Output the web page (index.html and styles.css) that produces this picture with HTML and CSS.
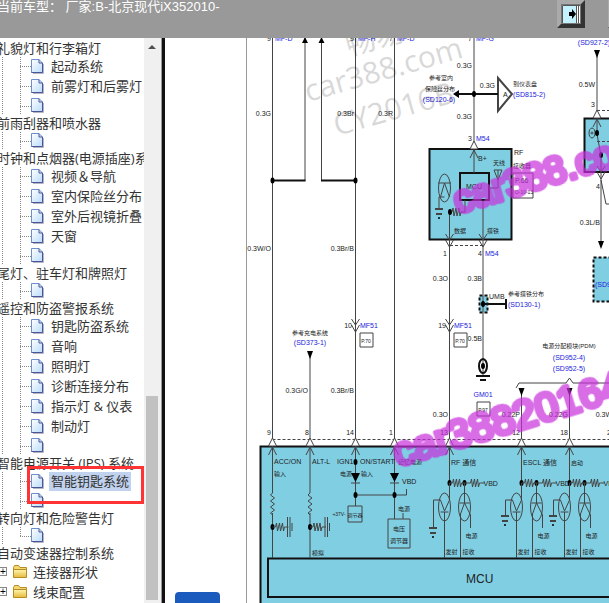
FILE: index.html
```
<!DOCTYPE html>
<html lang="zh-CN">
<head>
  <meta charset="UTF-8" />
  <meta name="viewport" content="width=device-width, initial-scale=1" />
  <title>北京现代iX35 电路图</title>
  <link rel="stylesheet" href="styles.css">
</head>
<body>

<svg class="defs" aria-hidden="true">
  <defs>
    <linearGradient id="paper" x1="0" y1="0" x2="1" y2="1">
      <stop offset="0" stop-color="#ffffff" />
      <stop offset="1" stop-color="#b9dcfb" />
    </linearGradient>
    <linearGradient id="gold" x1="0" y1="0" x2="0" y2="1">
      <stop offset="0" stop-color="#fff6b0" />
      <stop offset="1" stop-color="#e6b93c" />
    </linearGradient>
    <symbol id="page" viewBox="0 0 13 15">
      <path d="M2 14.5h10.5V5" fill="none" stroke="#b5b5c4" />
      <path d="M.5.5h7.500l3.500 3.500v9.500H.5z" fill="url(#paper)" stroke="#6d8fd0" />
      <path d="M8 .5v3.500h3.500M11.500 4v9.500H.5" fill="none" stroke="#4a559a" />
    </symbol>
    <symbol id="folder" viewBox="0 0 15 13">
      <path d="M.5 12V2.500l1-2h4l1.500 2h6.500V12z" fill="#f5d670" stroke="#b58d22" />
      <path d="M.5 12.500V4.500h13v8z" fill="url(#gold)" stroke="#b58d22" />
    </symbol>

    <!-- circuit parts, all drawn around 0,0 -->
    <g id="notch">
      <path d="M-4 0 0-8 4 0z" fill="#fff" />
      <path d="M-4 9 0 1 4 9" />
    </g>
    <g id="joint"><path d="M-4-6 0 0 4-6M-4 0 0 7 4 0" /></g>
    <ellipse id="dot" rx="2" ry="3" class="solid" />
    <path id="down" d="M-3-4h6L0 4z" class="solid" />
    <path id="zig" d="M0 0l1-4 1 8 2-8 1 8 2-8 1 8 1-4h1" />
    <path id="coil" d="M0-10l-2 2 4 3-4 3 4 3-4 3 4 3-4 3 2 2" />
    <g id="ground">
      <path d="M-4 0h8M-3 5h6" stroke-width="2" />
      <circle cy="9" r="1" class="solid" />
    </g>
    <g id="pull">
      <use href="#dot" />
      <path d="M0 0h3M13 0h3" />
      <path d="M15-10v20M17.500-10v20M19.500-4v8" stroke-width="1" />
      <use href="#zig" x="3" />
    </g>
    <g id="driver">
      <use href="#dot" />
      <use href="#zig" x="3" />
      <use href="#dot" x="15" />
      <path d="M0 0h3M13 0h8M31 0h4M0 0V17L-5 28M-16 17h7L-5 28M-9 29h8M-5 29v46" />
      <path d="M15 0v20M10 20h10M11 75V31L15 20M15 20l6 12v13" />
      <use href="#zig" x="21" />
      <ellipse cx="-5" cy="24" rx="6" ry="14" />
      <ellipse cx="15" cy="24" rx="6" ry="14" />
      <text class="label" x="34" y="3">VBD</text>
      <text class="label cn" x="16" y="55">电源</text>
      <text class="label cn" x="-4" y="71">发射</text>
      <text class="label cn" x="13" y="71">接收</text>
    </g>
  </defs>
</svg>

<header>
  <h1>当前车型： 厂家:B-北京现代iX352010-</h1>
  <button class="tool" aria-label="收起目录">
    <svg width="18" height="18" viewBox="0 0 18 18" aria-hidden="true">
      <path d="M0 0h18v18H0z" fill="#c3f1fd" />
      <path d="M14 0h4v18h-4z" fill="#fff" />
      <path d="M.5 18V.5H18M14.500 0v18M16.500 0v18" fill="none" stroke="#555" />
      <path d="M7 7h3V4l4 5-4 5v-3H7z" fill="#000" />
    </svg>
  </button>
  <button class="tool next" aria-label="下一页"></button>
</header>

<main>
  <nav>
    <ul class="tree">
      <li class="group">礼貌灯和行李箱灯</li>
      <li class="leaf"><svg><use href="#page" /></svg><a href="#">起动系统</a></li>
      <li class="leaf"><svg><use href="#page" /></svg><a href="#">前雾灯和后雾灯</a></li>
      <li class="leaf empty"><svg><use href="#page" /></svg></li>
      <li class="group">前雨刮器和喷水器</li>
      <li class="leaf empty"><svg><use href="#page" /></svg></li>
      <li class="group">时钟和点烟器(电源插座)系统</li>
      <li class="leaf"><svg><use href="#page" /></svg><a href="#">视频＆导航</a></li>
      <li class="leaf"><svg><use href="#page" /></svg><a href="#">室内保险丝分布</a></li>
      <li class="leaf"><svg><use href="#page" /></svg><a href="#">室外后视镜折叠</a></li>
      <li class="leaf"><svg><use href="#page" /></svg><a href="#">天窗</a></li>
      <li class="leaf empty"><svg><use href="#page" /></svg></li>
      <li class="group">尾灯、驻车灯和牌照灯</li>
      <li class="leaf empty"><svg><use href="#page" /></svg></li>
      <li class="group">遥控和防盗警报系统</li>
      <li class="leaf"><svg><use href="#page" /></svg><a href="#">钥匙防盗系统</a></li>
      <li class="leaf"><svg><use href="#page" /></svg><a href="#">音响</a></li>
      <li class="leaf"><svg><use href="#page" /></svg><a href="#">照明灯</a></li>
      <li class="leaf"><svg><use href="#page" /></svg><a href="#">诊断连接分布</a></li>
      <li class="leaf"><svg><use href="#page" /></svg><a href="#">指示灯 &amp; 仪表</a></li>
      <li class="leaf"><svg><use href="#page" /></svg><a href="#">制动灯</a></li>
      <li class="leaf empty"><svg><use href="#page" /></svg></li>
      <li class="group">智能电源开关 (IPS) 系统</li>
      <li class="leaf active"><svg><use href="#page" /></svg><a href="#">智能钥匙系统</a></li>
      <li class="leaf empty"><svg><use href="#page" /></svg></li>
      <li class="group">转向灯和危险警告灯</li>
      <li class="leaf empty last"><svg><use href="#page" /></svg></li>
      <li class="group">自动变速器控制系统</li>
      <li class="folder"><button aria-label="展开">+</button><svg><use href="#folder" /></svg><a href="#">连接器形状</a></li>
      <li class="folder"><button aria-label="展开">+</button><svg><use href="#folder" /></svg><a href="#">线束配置</a></li>
    </ul>
    <div class="scrollbar" aria-hidden="true">
      <span class="up"></span>
      <span class="space"></span>
      <span class="thumb"></span>
    </div>
  </nav>

  <section class="viewer">
    <svg class="diagram" viewBox="165 38 444 565" preserveAspectRatio="xMinYMin slice" role="img" aria-label="智能钥匙系统电路图">
      <path d="M246.500 38v565" class="edge" />

      <!-- modules -->
      <g class="module">
        <path d="M429.500 149h82v90.500h-82z" />
        <path d="M584.500 118.500H612V172h-27.500z" />
        <path d="M260.500 446.500H612V606H260.500z" />
        <path d="M268 558.500h344V597H268z" />
        <path d="M460 173h29v27h-29z" />
        <path d="M593.500 257.500H612v44h-18.500zM479.500 295.500h8v17h-8z" class="dashed" />
      </g>

      <!-- wires -->
      <g class="wire">
        <path d="M272.500 38v455M272.500 513v45M305 38v143M321.500 38v143M355.500 38v468M394.500 38v481M310 355v138M310 513v45" />
        <path d="M474 38v135M449.500 212v271M483 200v175M597 54v80l4 22v90M601 180l5 24h6" />
        <path d="M521.500 390v93M569.500 390v93M516 388l3-5h47l3.500-5 3.500 5H612" />
        <path d="M355.500 495h51v-6M403 513v6M461 212h4v-12M489 188h9v-18M494 170h8l-4 10zM439 209v-12h5.500M438 183h13M444.500 183l-4 14M444.500 183l5 14" />
        <path d="M348 506h14v16h-14zM388 519h22v29h-22zM513 173h20v25h-20zM360 333h13v14h-13zM454 333h13v14h-13zM477 402h13v14h-13z" />
        <path d="M498 78l14 16-14 17z" stroke-width="2" />
        <path d="M433.500 500v28M505.500 500v16M553.500 500v16" />
        <path d="M272.500 439.500H612M450 245.500h33M597 110.500h15M597 141.500h15" class="dashed" />
        <path d="M272.500 180.500h33M321 180.500h34.500M455 94h43M483 304h23M506 299v10" class="bold" />
        <path d="M476 376h14M480 380h6" class="bold" />
        <ellipse cx="444.500" cy="188" rx="6" ry="14" />
        <ellipse cx="592" cy="133" rx="3" ry="5" />
        <circle cx="592" cy="133" r="1" />
        <ellipse cx="483" cy="366" rx="4" ry="7" class="bold" />
        <path d="M351 473h9l-4.500 9zM390 473h9l-4.500 9z" class="solid" />
        <path d="M351 483h9M390 483h9" />
        <path d="M459 90l-6 4 6 4zM302 43l3-6 3 6zM318.500 43l3-6 3 6z" class="solid" />

        <use href="#notch" x="272.500" y="446" />
        <use href="#notch" x="310" y="446" />
        <use href="#notch" x="355.500" y="446" />
        <use href="#notch" x="394.500" y="446" />
        <use href="#notch" x="449.500" y="446" />
        <use href="#notch" x="521.500" y="446" />
        <use href="#notch" x="569.500" y="446" />
        <use href="#notch" x="474" y="149" />
        <use href="#notch" x="597" y="118" />
        <use href="#joint" x="355.500" y="325" />
        <use href="#joint" x="449.500" y="325" />
        <use href="#joint" x="449.500" y="240" />
        <use href="#joint" x="483" y="240" />
        <use href="#joint" x="601" y="172" />
        <use href="#dot" x="272.500" y="180.500" />
        <use href="#dot" x="355.500" y="180.500" />
        <use href="#dot" x="474" y="94" />
        <use href="#dot" x="450" y="212" />
        <use href="#dot" x="597" y="133" />
        <use href="#dot" x="601" y="155" />
        <use href="#dot" x="483" y="304" />
        <use href="#dot" x="483" y="366" />
        <use href="#dot" x="355.500" y="462" />
        <use href="#dot" x="355.500" y="495" />
        <use href="#dot" x="394.500" y="495" />
        <use href="#down" x="310" y="355" />
        <use href="#down" x="597" y="54" />
        <use href="#down" x="601" y="245" />
        <use href="#down" x="521.500" y="392" />
        <use href="#down" x="569.500" y="392" />
        <use href="#zig" x="452" y="212" />
        <use href="#coil" x="272.500" y="503" />
        <use href="#coil" x="310" y="503" />
        <use href="#ground" x="439" y="209" />
        <use href="#ground" x="433" y="528" />
        <use href="#ground" x="505" y="516" />
        <use href="#ground" x="553" y="516" />
        <use href="#pull" x="272.500" y="527" />
        <use href="#pull" x="310" y="527" />
        <use href="#driver" x="449.500" y="483" />
        <use href="#driver" x="521.500" y="483" />
        <use href="#driver" x="569.500" y="483" />
      </g>

      <!-- wire colours and sizes, right aligned to the wire -->
      <g class="label end">
        <text x="271" y="41">9</text>
        <text x="354" y="41">9</text>
        <text x="393" y="41">7</text>
        <text x="472" y="41">7</text>
        <text x="271" y="116">0.3G</text>
        <text x="354" y="116">0.3Br</text>
        <text x="393" y="116">0.3R</text>
        <text x="472" y="68">0.3G</text>
        <text x="495" y="88">0.3G</text>
        <text x="472" y="119">0.3G</text>
        <text x="472" y="141">3</text>
        <text x="595" y="87">0.5W</text>
        <text x="595" y="107">3</text>
        <text x="600" y="189">4</text>
        <text x="600" y="225">0.3L/B</text>
        <text x="271" y="251">0.3W/O</text>
        <text x="354" y="251">0.3Br/B</text>
        <text x="447" y="256">1</text>
        <text x="482" y="256">4</text>
        <text x="448" y="281">0.3O</text>
        <text x="482" y="281">0.3B</text>
        <text x="352" y="328">10</text>
        <text x="446" y="328">19</text>
        <text x="482" y="341">0.5B</text>
        <text x="308" y="393">0.3G/O</text>
        <text x="354" y="393">0.3Br/B</text>
        <text x="448" y="417">0.3O</text>
        <text x="520" y="417">0.22P</text>
        <text x="568" y="417">0.22G</text>
        <text x="612" y="417">0.3W</text>
        <text x="271" y="435">9</text>
        <text x="309" y="435">8</text>
        <text x="354" y="435">14</text>
        <text x="393" y="435">1</text>
        <text x="448" y="435">13</text>
        <text x="520" y="435">12</text>
        <text x="568" y="435">18</text>
        <text x="611" y="435">2</text>
      </g>

      <g class="label">
        <text x="514" y="155">RF</text>
        <text x="515" y="183">P.66</text>
        <text x="503" y="97">A</text>
        <text x="478" y="161">B+</text>
        <text x="489" y="299">UMB</text>
        <text x="274" y="464">ACC/ON</text>
        <text x="312" y="464">ALT-L</text>
        <text x="337" y="464">IGN1</text>
        <text x="360" y="464">ON/START</text>
        <text x="402" y="484">VBD</text>
        <text x="451" y="465">RF 通信</text>
        <text x="523" y="465">ESCL 通信</text>
        <text x="466" y="583" class="mcu">MCU</text>
      </g>
      <g class="label mid">
        <text x="474" y="189">MCU</text>
        <text x="366" y="343" class="tiny">P.70</text>
        <text x="460" y="343" class="tiny">P.70</text>
        <text x="483" y="412" class="tiny">P.97</text>
        <text x="524" y="194" class="tiny">O-10-13</text>
        <text x="339" y="516" class="tiny">+37V-</text>
      </g>

      <g class="label cn">
        <text x="513" y="86">到仪表盘</text>
        <text x="493" y="165">天线</text>
        <text x="513" y="168">接收器</text>
        <text x="454" y="233">数据</text>
        <text x="487" y="233">搭铁</text>
        <text x="508" y="296">参考搭铁分布</text>
        <text x="274" y="476">输入</text>
        <text x="340" y="476">电源</text>
        <text x="361" y="476">输入</text>
        <text x="398" y="464">记忆电源</text>
        <text x="398" y="511">电源</text>
        <text x="312" y="555">模拟</text>
        <text x="571" y="465">启动</text>
      </g>
      <g class="label cn mid">
        <text x="441" y="80">参考室内</text>
        <text x="440" y="91">保险丝分布</text>
        <text x="310" y="335">参考充电系统</text>
        <text x="569" y="348">电源分配模块(PDM)</text>
        <text x="399" y="531">电压</text>
        <text x="399" y="543">调节器</text>
        <text x="355" y="517" class="tiny">调节器</text>
      </g>

      <!-- references to other sheets -->
      <g class="label ref">
        <text x="275" y="41">MF-D</text>
        <text x="358" y="41">MF-H</text>
        <text x="397" y="41">MF-D</text>
        <text x="476" y="41">MF-G</text>
        <text x="513" y="97">(SD815-2)</text>
        <text x="476" y="141">M54</text>
        <text x="485" y="256">M54</text>
        <text x="508" y="307">(SD130-1)</text>
        <text x="360" y="328">MF51</text>
        <text x="454" y="328">MF51</text>
        <text x="595" y="287">(SD927-2)</text>
      </g>
      <g class="label ref mid">
        <text x="439" y="102">(SD120-6)</text>
        <text x="594" y="45">(SD927-2)</text>
        <text x="310" y="345">(SD373-1)</text>
        <text x="569" y="360">(SD952-4)</text>
        <text x="569" y="371">(SD952-5)</text>
        <text x="483" y="397">GM01</text>
      </g>

      <!-- watermarks -->
      <g class="mark">
        <text transform="translate(349 56) rotate(-16)">畅易</text>
        <text transform="translate(308 102) rotate(-16)">car388.com</text>
        <text transform="translate(337 136) rotate(-16)">CY2016B</text>
      </g>
      <g class="stamp">
        <text transform="translate(458 214) rotate(-17)">car388.com</text>
        <text transform="translate(398 467) rotate(-17)" class="large">car38820164</text>
      </g>
    </svg>
    <button class="catalog">目录</button>
  </section>
</main>

</body>
</html>
```
FILE: styles.css
```
*, *::after { box-sizing: border-box; }
body {
  margin: 0; height: 100vh; overflow: hidden;
  display: flex; flex-direction: column;
  font-family: "Open Sans", "Noto Sans CJK SC", sans-serif; font-size: 13px;
  background: #fff; color: #333;
}
.defs { position: absolute; width: 0; height: 0; }
header {
  flex: none; display: flex; align-items: flex-start; height: 38px;
  background: #999; overflow: hidden;
}
header h1 {
  flex: 1; margin: 0 0 0 -3px; color: #fff; white-space: pre;
  font: 13px/13px "Liberation Sans", "Noto Sans CJK SC", sans-serif;
}
.tool {
  flex: none; width: 28px; height: 28px; padding: 0; margin-right: 23px;
  display: flex; align-items: center; justify-content: center;
  border: 4px solid; border-color: #aaa #333 #333 #aaa; background: #777;
}
.tool.next { margin-right: -27px; }
main { flex: 1; display: flex; min-height: 0; }

/* Tree */
nav {
  flex: none; width: 165px; display: flex; overflow: hidden;
  border-right: 3px solid #111;
}
.tree {
  flex: 1; min-width: 0; margin: 0; padding: 2px 0 0; list-style: none;
  overflow: hidden; white-space: nowrap;
}
.tree a { color: inherit; text-decoration: none; }
.group { height: 17px; line-height: 17px; margin-left: -3px; }
.leaf {
  position: relative; height: 20px; padding: 0 0 2px 31px;
  display: flex; align-items: center;
  background:
    repeating-linear-gradient(#888 0 1px, transparent 1px 2px) 2px 0 / 1px 100% no-repeat,
    repeating-linear-gradient(#888 0 1px, transparent 1px 2px) 20px 0 / 1px 100% no-repeat,
    repeating-linear-gradient(90deg, #888 0 1px, transparent 1px 2px) 20px 9px / 11px 1px no-repeat;
}
.leaf svg { flex: none; width: 13px; height: 15px; }
.leaf a { margin-left: 5px; padding: 0 2px; line-height: 19px; }
.leaf.empty { height: 18px; }
.leaf.last { background-size: 1px 100%, 1px 50%, 11px 1px; }
.leaf.active a { background: #c1d2ee; }
.leaf.active::after {
  content: ""; position: absolute; z-index: 1; left: 27px; right: 0; top: -6px;
  height: 38px; border: 3px solid #f33; pointer-events: none;
}
.folder { height: 20px; padding-bottom: 2px; display: flex; align-items: center; }
.folder button {
  width: 7px; height: 9px; padding: 0; border: 1px solid #888; border-left: 0;
  background: #fff; color: #000; font: 10px/7px "Liberation Sans", sans-serif;
}
.folder svg { width: 15px; height: 13px; margin: 0 5px 0 6px; }

/* Scrollbar */
.scrollbar {
  flex: none; width: 18px; padding: 0 3px 3px 2px;
  display: flex; flex-direction: column; align-items: stretch;
  background: #f0f0f0; border-right: 1px solid #999;
}
.scrollbar .up {
  width: 8px; margin: 7px auto 6px; border: 4px solid transparent;
  border-top: 0; border-bottom-color: #505050;
}
.scrollbar .space { flex: 5; }
.scrollbar .thumb { flex: 3; background: #c1c1c1; }

/* Diagram */
.viewer { flex: 1; min-width: 0; position: relative; overflow: hidden; }
.diagram { display: block; width: 100%; height: 100%; }
.edge { stroke: #999; }
.module { fill: #80cee2; stroke: #111; stroke-width: 2; }
.wire { fill: none; stroke: #444; }
.wire .bold { stroke: #111; stroke-width: 2; }
.dashed { stroke-dasharray: 3 2; }
.solid { fill: #000; stroke: none; }
.label {
  font-family: "Liberation Sans", "Noto Sans CJK SC", sans-serif;
  font-size: 7px; fill: #222; stroke: none;
}
.label.cn { font-size: 6px; }
.label .tiny { font-size: 5px; }
.label.ref { fill: #22d; }
.end { text-anchor: end; }
.mid { text-anchor: middle; }
.label .mcu { font-size: 12px; }
.mark { font-size: 30px; fill: #000; opacity: 0.15; }
.stamp {
  font-family: "Liberation Sans", sans-serif; font-size: 38px;
  fill: #c72fdc; stroke: #c72fdc; stroke-width: 5; stroke-linejoin: round; opacity: 0.7;
}
.stamp .large { font-size: 41px; }
.catalog {
  position: absolute; left: 10px; bottom: -19px; width: 45px; height: 30px;
  border: 0; border-radius: 4px; background: #1a5bbd; color: #fff;
  font: 13px "Noto Sans CJK SC", sans-serif;
}
```
